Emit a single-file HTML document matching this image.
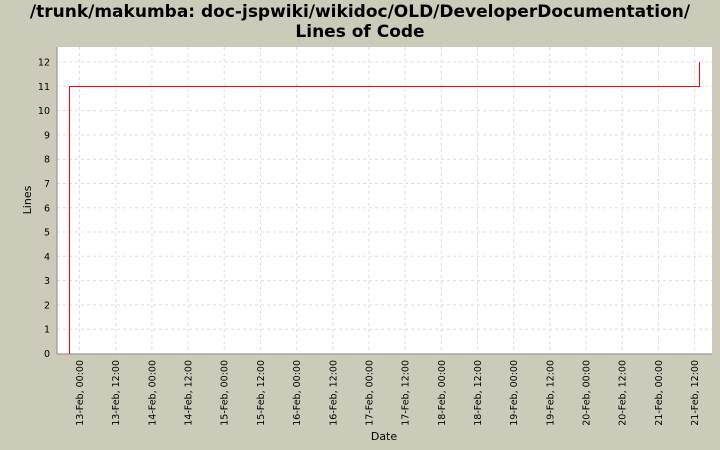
<!DOCTYPE html>
<html><head><style>
body{margin:0;width:720px;height:450px;background:#cccbb9;font-family:"DejaVu Sans","Liberation Sans",sans-serif;overflow:hidden;position:relative}
.t{position:absolute;left:0;width:720px;text-align:center;font-weight:bold;font-size:17px;color:#000}
</style></head><body>
<div class="t" style="top:2px">/trunk/makumba: doc-jspwiki/wikidoc/OLD/DeveloperDocumentation/</div>
<div class="t" style="top:22px">Lines of Code</div>
<svg width="720" height="450" style="position:absolute;left:0;top:0" font-family="DejaVu Sans, Liberation Sans, sans-serif" font-size="9.5">
<rect x="57" y="47" width="655" height="307" fill="#fff"/>
<g stroke="#dcdcdc" stroke-dasharray="3,3">
<line x1="57" x2="712" y1="329.2" y2="329.2"/><line x1="57" x2="712" y1="304.9" y2="304.9"/><line x1="57" x2="712" y1="280.6" y2="280.6"/><line x1="57" x2="712" y1="256.3" y2="256.3"/><line x1="57" x2="712" y1="232" y2="232"/><line x1="57" x2="712" y1="207.8" y2="207.8"/><line x1="57" x2="712" y1="183.5" y2="183.5"/><line x1="57" x2="712" y1="159.2" y2="159.2"/><line x1="57" x2="712" y1="134.9" y2="134.9"/><line x1="57" x2="712" y1="110.6" y2="110.6"/><line x1="57" x2="712" y1="86.3" y2="86.3"/><line x1="57" x2="712" y1="62" y2="62"/>
<line y1="47" y2="354" x1="79.5" x2="79.5"/><line y1="47" y2="354" x1="115.7" x2="115.7"/><line y1="47" y2="354" x1="151.9" x2="151.9"/><line y1="47" y2="354" x1="188" x2="188"/><line y1="47" y2="354" x1="224.2" x2="224.2"/><line y1="47" y2="354" x1="260.4" x2="260.4"/><line y1="47" y2="354" x1="296.6" x2="296.6"/><line y1="47" y2="354" x1="332.8" x2="332.8"/><line y1="47" y2="354" x1="368.9" x2="368.9"/><line y1="47" y2="354" x1="405.1" x2="405.1"/><line y1="47" y2="354" x1="441.3" x2="441.3"/><line y1="47" y2="354" x1="477.5" x2="477.5"/><line y1="47" y2="354" x1="513.7" x2="513.7"/><line y1="47" y2="354" x1="549.8" x2="549.8"/><line y1="47" y2="354" x1="586" x2="586"/><line y1="47" y2="354" x1="622.2" x2="622.2"/><line y1="47" y2="354" x1="658.4" x2="658.4"/><line y1="47" y2="354" x1="694.6" x2="694.6"/>
</g>
<g text-anchor="end">
<text x="50" y="357">0</text><text x="50" y="332.7">1</text><text x="50" y="308.4">2</text><text x="50" y="284.1">3</text><text x="50" y="259.8">4</text><text x="50" y="235.5">5</text><text x="50" y="211.3">6</text><text x="50" y="187">7</text><text x="50" y="162.7">8</text><text x="50" y="138.4">9</text><text x="50" y="114.1">10</text><text x="50" y="89.8">11</text><text x="50" y="65.5">12</text>
<text transform="translate(83,360) rotate(-90)">13-Feb, 00:00</text>
<text transform="translate(119.2,360) rotate(-90)">13-Feb, 12:00</text>
<text transform="translate(155.4,360) rotate(-90)">14-Feb, 00:00</text>
<text transform="translate(191.5,360) rotate(-90)">14-Feb, 12:00</text>
<text transform="translate(227.7,360) rotate(-90)">15-Feb, 00:00</text>
<text transform="translate(263.9,360) rotate(-90)">15-Feb, 12:00</text>
<text transform="translate(300.1,360) rotate(-90)">16-Feb, 00:00</text>
<text transform="translate(336.3,360) rotate(-90)">16-Feb, 12:00</text>
<text transform="translate(372.4,360) rotate(-90)">17-Feb, 00:00</text>
<text transform="translate(408.6,360) rotate(-90)">17-Feb, 12:00</text>
<text transform="translate(444.8,360) rotate(-90)">18-Feb, 00:00</text>
<text transform="translate(481,360) rotate(-90)">18-Feb, 12:00</text>
<text transform="translate(517.2,360) rotate(-90)">19-Feb, 00:00</text>
<text transform="translate(553.3,360) rotate(-90)">19-Feb, 12:00</text>
<text transform="translate(589.5,360) rotate(-90)">20-Feb, 00:00</text>
<text transform="translate(625.7,360) rotate(-90)">20-Feb, 12:00</text>
<text transform="translate(661.9,360) rotate(-90)">21-Feb, 00:00</text>
<text transform="translate(698.1,360) rotate(-90)">21-Feb, 12:00</text>
</g>
<line x1="57" y1="47" x2="57" y2="354" stroke="#888"/>
<line x1="57" y1="354" x2="712" y2="354" stroke="#888"/>
<polyline points="69.5,354 69.5,86.5 699.5,86.5 699.5,62" fill="none" stroke="#f00" stroke-width="1"/>
<text transform="translate(31,200) rotate(-90)" text-anchor="middle" font-size="11">Lines</text>
<text x="384" y="440" text-anchor="middle" font-size="11">Date</text>
</svg>
</body></html>
